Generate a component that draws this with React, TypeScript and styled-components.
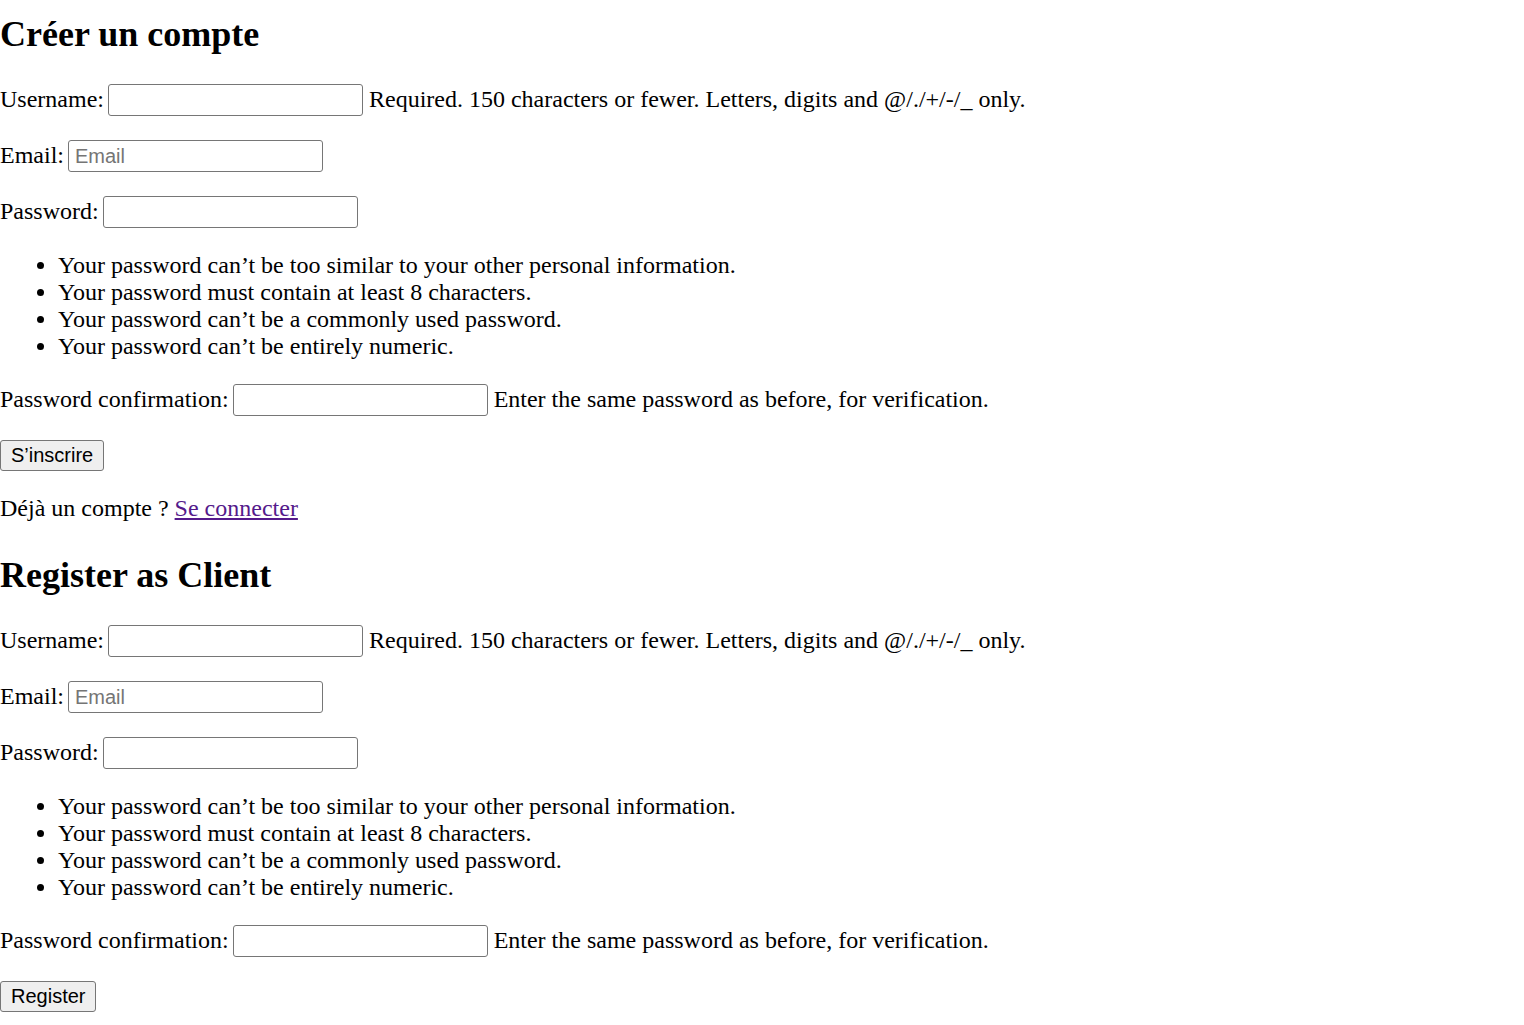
import React from "react";
import styled, { createGlobalStyle } from "styled-components";

const GlobalStyle = createGlobalStyle`
  html, body {
    margin: 0;
    padding: 0;
    background: #ffffff;
  }
  body {
    font-family: "Liberation Serif", "Times New Roman", serif;
    font-size: 24px;
    color: #000000;
  }
`;

const Page = styled.div`
  display: flex;
  flex-direction: column;
  gap: 32px;
  padding-top: 13px;
`;

const Section = styled.section`
  display: flex;
  flex-direction: column;
`;

const Title = styled.h2`
  margin: 0 0 29px 0;
  font-size: 36px;
  font-weight: bold;
  line-height: 42px;
`;

const Form = styled.form`
  display: flex;
  flex-direction: column;
  align-items: flex-start;
  gap: 24px;
`;

const FieldRow = styled.div`
  display: flex;
  align-items: center;
  height: 32px;
  white-space: nowrap;
`;

const Label = styled.label`
  line-height: 27px;
  margin: 0 4px 2px 0;
`;

const HelpText = styled.span`
  line-height: 27px;
  margin: 0 0 2px 6px;
`;

const TextInput = styled.input`
  box-sizing: border-box;
  width: 255px;
  height: 32px;
  margin: 0;
  padding: 0 6px;
  border: 1px solid #767676;
  border-radius: 3px;
  background: #ffffff;
  font-family: "Liberation Sans", Arial, sans-serif;
  font-size: 20px;
  color: #000000;
  &::placeholder {
    color: #757575;
  }
`;

const HelpList = styled.ul`
  margin: 0;
  padding-left: 58px;
  line-height: 27px;
  list-style: disc;
`;

const SubmitButton = styled.button`
  box-sizing: border-box;
  height: 31px;
  margin: 0;
  padding: 0 10px 1px;
  border: 1px solid #767676;
  border-radius: 3px;
  background: #efefef;
  font-family: "Liberation Sans", Arial, sans-serif;
  font-size: 20px;
  color: #000000;
  line-height: 1;
`;

const FooterLine = styled.p`
  margin: 24px 0 0 0;
  line-height: 27px;
`;

const Link = styled.a`
  color: #551a8b;
  text-decoration: underline;
`;

const passwordRules = [
  "Your password can\u2019t be too similar to your other personal information.",
  "Your password must contain at least 8 characters.",
  "Your password can\u2019t be a commonly used password.",
  "Your password can\u2019t be entirely numeric.",
];

const RegistrationForm: React.FC<{ submitLabel: string }> = ({ submitLabel }) => (
  <Form onSubmit={(e) => e.preventDefault()}>
    <FieldRow>
      <Label>Username:</Label>
      <TextInput type="text" />
      <HelpText>Required. 150 characters or fewer. Letters, digits and @/./+/-/_ only.</HelpText>
    </FieldRow>
    <FieldRow>
      <Label>Email:</Label>
      <TextInput type="email" placeholder="Email" />
    </FieldRow>
    <FieldRow>
      <Label>Password:</Label>
      <TextInput type="password" />
    </FieldRow>
    <HelpList>
      {passwordRules.map((r) => (
        <li key={r}>{r}</li>
      ))}
    </HelpList>
    <FieldRow>
      <Label>Password confirmation:</Label>
      <TextInput type="password" />
      <HelpText>Enter the same password as before, for verification.</HelpText>
    </FieldRow>
    <SubmitButton type="submit">{submitLabel}</SubmitButton>
  </Form>
);

export default function App() {
  return (
    <>
      <GlobalStyle />
      <Page>
        <Section>
          <Title>Créer un compte</Title>
          <RegistrationForm submitLabel={"S\u2019inscrire"} />
          <FooterLine>
            Déjà un compte ? <Link href="#">Se connecter</Link>
          </FooterLine>
        </Section>
        <Section>
          <Title>Register as Client</Title>
          <RegistrationForm submitLabel="Register" />
        </Section>
      </Page>
    </>
  );
}
